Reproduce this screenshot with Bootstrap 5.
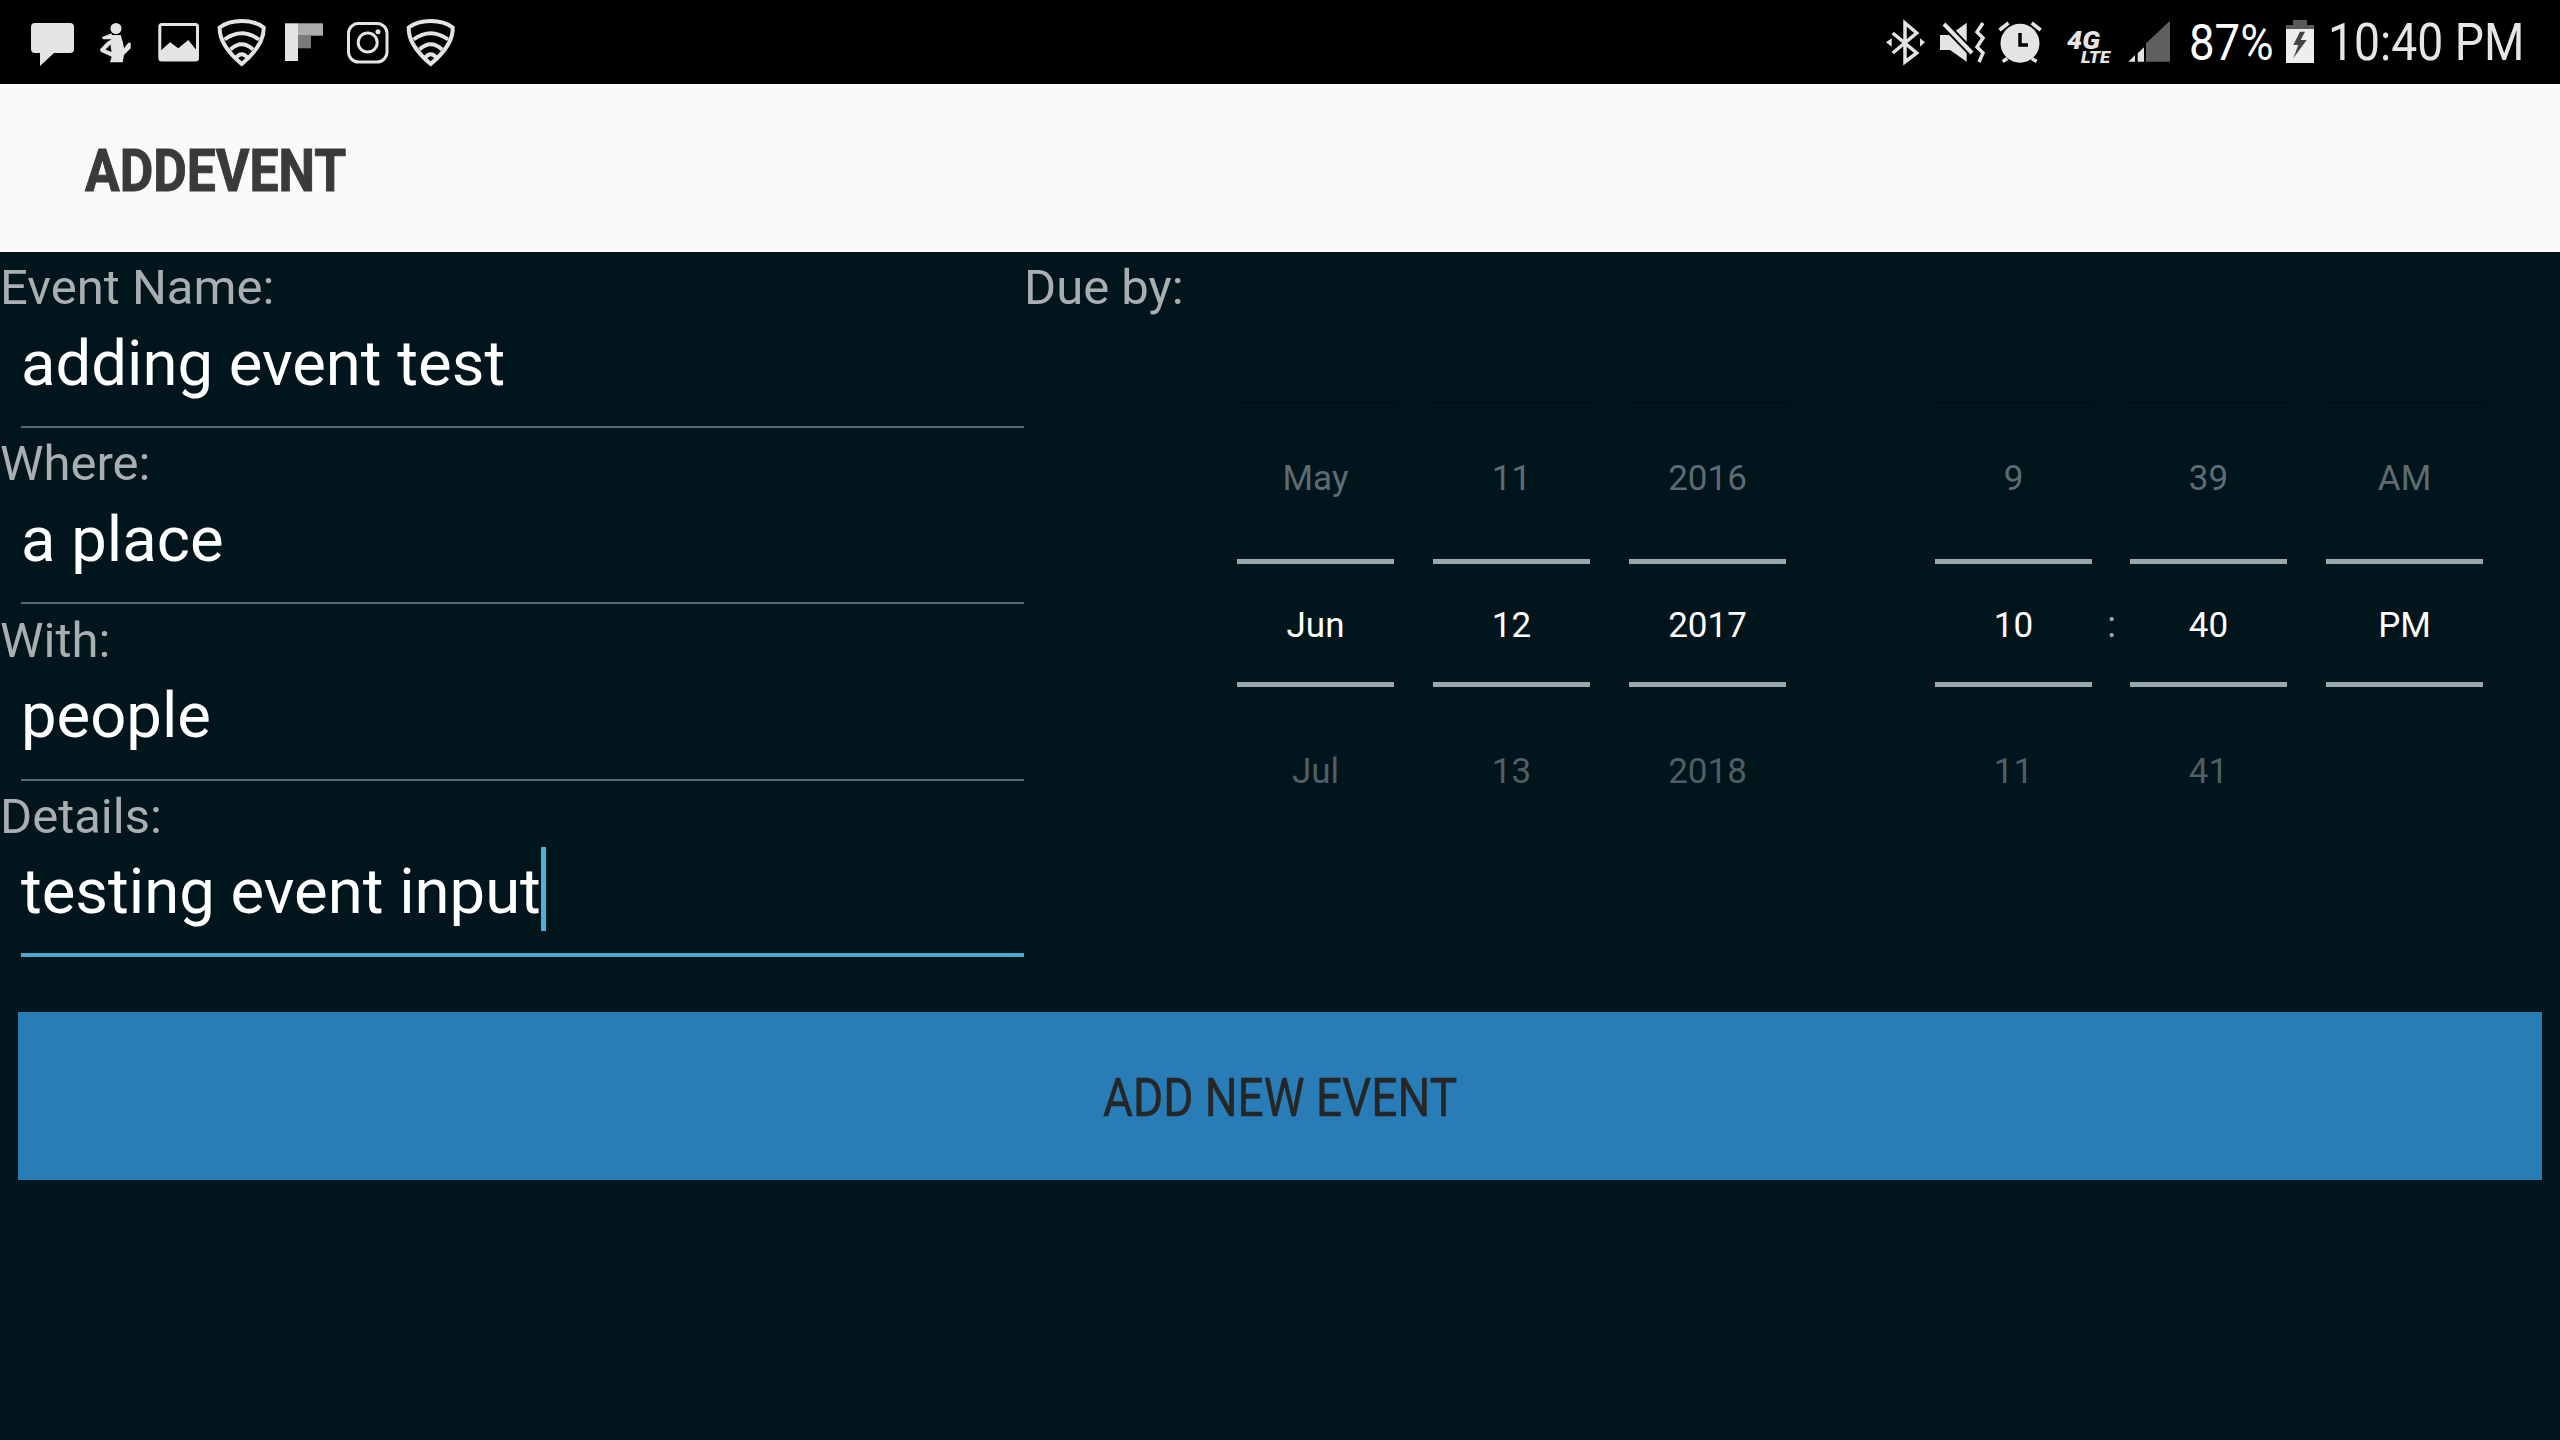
<!DOCTYPE html>
<html lang="en">
<head>
    <meta charset="UTF-8">
    <title>AddEvent</title>
    <link href="https://cdn.jsdelivr.net/npm/bootstrap@5.3.0/dist/css/bootstrap.min.css" rel="stylesheet">
    <style>
        body {
            background-color: #00151c;
            font-family: Roboto, "Liberation Sans", sans-serif;
            height: 1440px;
            overflow: hidden;
        }
        /* status bar */
        .status-strip {
            background: #000;
            height: 84px;
            padding: 0 40px 0 21px;
        }
        .status-strip svg { display: block; height: 84px; flex: none; }
        .slot-icon { width: 63px; }
        .status-pct, .status-time {
            display: block;
            flex: none;
            line-height: 84px;
            padding-top: 1px;
            white-space: nowrap;
            transform-origin: left center;
        }
        .status-pct { color: #fff; font-size: 50px; margin-left: 9px; width: 84px; transform: scaleX(.91); }
        .status-time { color: #e6e6e6; font-size: 52px; margin-left: 14px; width: 192px; transform: scaleX(.89); }
        .battery-icon { margin-left: 13px; }
        .ico { fill: #e4e4e4; }
        .ico-line { fill: none; stroke: #e4e4e4; stroke-width: 3.5; }
        .shield-line { fill: none; stroke: #e4e4e4; stroke-width: 4; }
        .lte-text { fill: #e4e4e4; font-family: Roboto, sans-serif; font-weight: 900; font-style: italic; }

        /* app header */
        .app-head {
            background: #fafafa;
            height: 168px;
            padding: 5px 0 0 85px;
        }
        .app-title {
            color: #3a3a3a;
            font-size: 60px;
            font-weight: 700;
            line-height: 1;
            margin: 0;
            -webkit-text-stroke: 1px #3a3a3a;
            transform: scaleX(.86);
            transform-origin: left center;
        }

        /* form */
        .left-pane { width: 1024px; flex: none; }
        .event-field { height: 176.33px; padding-top: 8px; }
        .event-label {
            color: #a9aeb1;
            font-size: 49px;
            line-height: 56px;
            margin: 0 0 8px 0;
            display: block;
        }
        .event-input, .event-input:focus {
            background: transparent;
            border: 0;
            border-bottom: 2px solid #5a686d;
            border-radius: 0;
            box-shadow: none;
            color: #fff;
            font-size: 63.4px;
            line-height: 76px;
            height: 104px;
            margin-left: 21px;
            width: 1003px;
            padding: 0 0 25px 0;
        }
        .event-input.is-active { border-bottom: 4px solid #4ea9cf; padding: 0; }
        .caret-bar {
            display: inline-block;
            width: 5px;
            height: 84px;
            margin: -20px 0 -20px 0;
            background: #4db0dc;
            vertical-align: 2px;
        }

        /* date/time picker */
        .due-pane { padding-top: 8px; }
        .picker-wrap { margin: 86px 0 0 213px; }
        .picker-col { width: 158px; border-top: 1px solid #000b10; border-right: 1px solid #001017; }
        .picker-cell {
            font-size: 35px;
            color: #5e6c71;
            text-align: center;
            height: 157px;
            line-height: 42px;
        }
        .cell-top { padding-top: 55px; height: 156px; }
        .cell-mid {
            color: #fff;
            height: 128px;
            line-height: 123px;
            border-top: 5px solid #9aa8ab;
            border-bottom: 5px solid #9aa8ab;
        }
        .cell-low { padding-top: 64px; color: #515e63; }
        .picker-gap { width: 38px; }
        .picker-colon {
            width: 37px;
            color: #9aa8ab;
            font-size: 36px;
            line-height: 123px;
            text-align: center;
            margin-top: 162px;
        }
        .picker-break { width: 148px; }

        /* submit */
        .add-btn, .add-btn:hover {
            background: #297db7;
            border: 0;
            border-radius: 0;
            color: #262626;
            display: block;
            font-size: 53px;
            height: 168px;
            margin: 55px 18px 0;
            padding: 4px 0 0;
            width: 2524px;
        }
        .add-btn span { display: inline-block; -webkit-text-stroke: .5px #262626; transform: scaleX(.868); }
    </style>
</head>
<body>
    <!-- Status bar -->
    <div class="status-strip d-flex align-items-center">
        <svg class="slot-icon" viewBox="0 0 63 84"><path class="ico" d="M14 23H49a4 4 0 0 1 4 4V49a4 4 0 0 1-4 4H33L19 66V53H14a4 4 0 0 1-4-4V27a4 4 0 0 1 4-4Z"/></svg>
        <svg class="slot-icon" viewBox="0 0 63 84"><circle class="ico" cx="32" cy="28.5" r="5.5"/><path class="ico" fill-rule="evenodd" d="M27.7 35H36.7L38.7 41.7 40 48.3 44.3 42.7H46.7V48.3L40 55 38.7 62.3H26L27.7 56.7 16.7 51.7 16 49.3 23.3 41.7 27.7 39.3H19.3L17.7 37.3 27.7 33.3ZM26.5 44.5 21.5 49.5 27.5 52Z"/></svg>
        <svg class="slot-icon" viewBox="0 0 63 84"><rect x="12.8" y="24.5" width="37.7" height="35.5" rx="2" fill="none" stroke="#e4e4e4" stroke-width="3"/><path class="ico" d="M12.8 51.5 23 42.3 31.3 48.3 41.3 40 50.5 51.5V60H12.8Z"/></svg>
        <svg class="slot-icon" viewBox="0 0 63 84"><path class="shield-line" d="M31.7 21Q18 21 9.7 27.5 9 45 31.7 64 54.4 45 53.7 27.5 45.4 21 31.7 21Z"/><path class="shield-line" d="M14.5 39.5Q31.7 27 49 39.5M20.5 49.5Q31.7 39 43 49.5M25.5 58.5Q31.7 50 38 58.5"/></svg>
        <svg class="slot-icon" viewBox="0 0 63 84"><rect x="12" y="23.3" width="13" height="37.7" fill="#e4e4e4"/><rect x="25" y="23.3" width="25" height="12.4" fill="#acacac"/><rect x="25" y="35.7" width="13" height="12.6" fill="#7a7a7a"/></svg>
        <svg class="slot-icon" viewBox="0 0 63 84"><rect x="12.5" y="23.5" width="38.5" height="38.5" rx="10" fill="none" stroke="#e4e4e4" stroke-width="3"/><circle cx="31.7" cy="42.5" r="9.5" fill="none" stroke="#e4e4e4" stroke-width="3"/><circle class="ico" cx="42" cy="31.7" r="2.5"/></svg>
        <svg class="slot-icon" viewBox="0 0 63 84"><path class="shield-line" d="M31.7 21Q18 21 9.7 27.5 9 45 31.7 64 54.4 45 53.7 27.5 45.4 21 31.7 21Z"/><path class="shield-line" d="M14.5 39.5Q31.7 27 49 39.5M20.5 49.5Q31.7 39 43 49.5M25.5 58.5Q31.7 50 38 58.5"/></svg>

        <svg class="ms-auto" width="54" viewBox="0 0 54 84"><path class="ico-line" stroke-width="4" d="M12.7 33 36.7 53 25 62V23L36.7 33 12.7 53"/><path class="ico" d="M6 42.3 11.7 38.3V46.7ZM45 42.3 40 38.3V46.7Z"/></svg>
        <svg width="58" viewBox="0 0 58 84"><path class="ico" d="M6 35H16L32.7 22.7V61.7L16 50H6Z"/><path d="M10 24 38 53" fill="none" stroke="#000" stroke-width="8"/><path d="M10 24 38 53" fill="none" stroke="#e4e4e4" stroke-width="4"/><path class="ico-line" d="M49 23 43 32 49 38 43 47 49 53 45 62"/></svg>
        <svg width="58" viewBox="0 0 58 84"><circle class="ico" cx="28" cy="43.3" r="19.5"/><path d="M28 33V45H36" fill="none" stroke="#000" stroke-width="3.5"/><path class="ico-line" stroke-width="4" d="M7.5 30 16.5 23M39.7 23 48.7 30M10.7 61.5 15.3 58.5M39.7 58.5 44.7 61.5"/></svg>
        <svg width="70" viewBox="0 0 70 84"><text class="lte-text" x="17" y="49" font-size="25" textLength="33" lengthAdjust="spacingAndGlyphs">4G</text><text class="lte-text" x="31" y="63" font-size="17" textLength="29" lengthAdjust="spacingAndGlyphs">LTE</text></svg>
        <svg width="60" viewBox="0 0 60 84"><path fill="#5f5f5f" d="M26 61.7V43.3L50 20.7V61.7Z"/><path class="ico" d="M8.3 61.7 15 55V61.7ZM17.7 53.3 24 47.3V61.7H17.7Z"/></svg>
        <span class="status-pct">87%</span>
        <svg class="battery-icon" width="28" viewBox="0 0 28 84"><path fill="#5a5a5a" d="M7 20H21V25H28V30H0V25H7Z"/><path fill="#eee" d="M0 29H28V63H0Z"/><path fill="#444" d="M14 31.7 7.3 45H12.3L7.3 58.3 20.7 40H14.7L19 31.7Z"/></svg>
        <span class="status-time">10:40 PM</span>
    </div>

    <!-- App header -->
    <header class="app-head d-flex align-items-center">
        <h1 class="app-title">ADDEVENT</h1>
    </header>

    <!-- Form -->
    <div class="d-flex">
        <form class="left-pane">
            <div class="event-field">
                <label class="event-label">Event Name:</label>
                <input class="form-control event-input" value="adding event test">
            </div>
            <div class="event-field">
                <label class="event-label">Where:</label>
                <input class="form-control event-input" value="a place">
            </div>
            <div class="event-field">
                <label class="event-label">With:</label>
                <input class="form-control event-input" value="people">
            </div>
            <div class="event-field">
                <label class="event-label">Details:</label>
                <div class="form-control event-input is-active">testing event input<span class="caret-bar"></span></div>
            </div>
        </form>
        <div class="due-pane flex-grow-1">
            <span class="event-label">Due by:</span>
            <div class="picker-wrap d-flex">
                <div class="picker-col"><div class="picker-cell cell-top">May</div><div class="picker-cell cell-mid">Jun</div><div class="picker-cell cell-low">Jul</div></div>
                <div class="picker-gap"></div>
                <div class="picker-col"><div class="picker-cell cell-top">11</div><div class="picker-cell cell-mid">12</div><div class="picker-cell cell-low">13</div></div>
                <div class="picker-gap"></div>
                <div class="picker-col"><div class="picker-cell cell-top">2016</div><div class="picker-cell cell-mid">2017</div><div class="picker-cell cell-low">2018</div></div>
                <div class="picker-break"></div>
                <div class="picker-col"><div class="picker-cell cell-top">9</div><div class="picker-cell cell-mid">10</div><div class="picker-cell cell-low">11</div></div>
                <div class="picker-colon">:</div>
                <div class="picker-col"><div class="picker-cell cell-top">39</div><div class="picker-cell cell-mid">40</div><div class="picker-cell cell-low">41</div></div>
                <div class="picker-gap"></div>
                <div class="picker-col"><div class="picker-cell cell-top">AM</div><div class="picker-cell cell-mid">PM</div><div class="picker-cell cell-low">&nbsp;</div></div>
            </div>
        </div>
    </div>

    <button type="button" class="btn add-btn"><span>ADD NEW EVENT</span></button>

    <script src="https://cdn.jsdelivr.net/npm/bootstrap@5.3.0/dist/js/bootstrap.bundle.min.js"></script>
</body>
</html>
